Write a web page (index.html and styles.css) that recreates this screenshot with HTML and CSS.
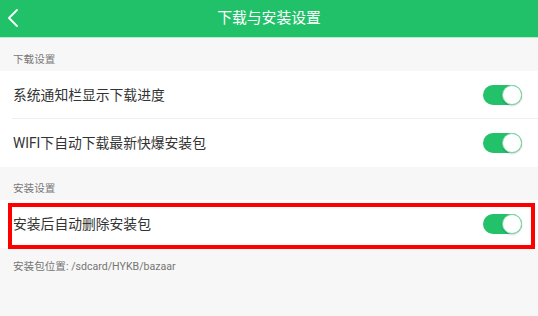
FILE: index.html
```html
<!DOCTYPE html>
<html lang="zh-CN">
<head>
<meta charset="utf-8">
<title>下载与安装设置</title>
<link rel="stylesheet" href="styles.css">
</head>
<body>
<div class="page">
  <header class="topbar">
    <span class="back">
      <svg width="26" height="37" viewBox="0 0 26 37"><polyline points="17,10 9,18 17,26" fill="none" stroke="#fff" stroke-width="1.8" stroke-linecap="round" stroke-linejoin="round"/></svg>
    </span>
    <h1 class="title">下载与安装设置</h1>
  </header>

  <div class="section">下载设置</div>
  <div class="group">
    <div class="row divided">
      <span class="label">系统通知栏显示下载进度</span>
      <span class="switch on"><span class="knob"></span></span>
    </div>
    <div class="row">
      <span class="label">WIFI下自动下载最新快爆安装包</span>
      <span class="switch on"><span class="knob"></span></span>
    </div>
  </div>

  <div class="section">安装设置</div>
  <div class="group">
    <div class="row highlighted">
      <span class="label">安装后自动删除安装包</span>
      <span class="switch on"><span class="knob"></span></span>
      <span class="mark"></span>
    </div>
  </div>

  <p class="path">安装包位置: /sdcard/HYKB/bazaar</p>
</div>
</body>
</html>
```

FILE: styles.css
```css
* { box-sizing: border-box; }
html, body {
  margin: 0;
  padding: 0;
  background: #f7f7f7;
}
body {
  font-family: Roboto, "Noto Sans CJK SC", sans-serif;
  width: 538px;
  height: 316px;
  overflow: hidden;
}
.page {
  display: flex;
  flex-direction: column;
}
.topbar {
  position: relative;
  height: 38px;
  background: #21c16a;
  border-bottom: 1px solid #b9ebcc;
  display: flex;
  align-items: center;
  justify-content: center;
}
.back {
  position: absolute;
  left: 0;
  top: 0;
  display: flex;
}
.title {
  margin: 0;
  font-size: 14.8px;
  font-weight: 400;
  color: #fff;
  line-height: 37px;
}
.section {
  height: 33px;
  padding: 14px 13px 3px;
  font-size: 10.6px;
  line-height: 16px;
  color: #777;
}
.group {
  background: #fff;
}
.row {
  position: relative;
  height: 48px;
  display: flex;
  align-items: center;
  justify-content: space-between;
  padding: 0 16px 0 13px;
}
.row.divided::after {
  content: "";
  position: absolute;
  left: 12px;
  right: 0;
  bottom: 0;
  height: 1px;
  background: #efefef;
}
.label {
  font-size: 13.8px;
  color: #333;
  line-height: 20px;
}
.switch {
  position: relative;
  width: 39px;
  height: 20px;
  border-radius: 10px;
  background: #22c16a;
  margin-top: -1px;
}
.knob {
  position: absolute;
  right: 0;
  top: 0;
  width: 20px;
  height: 20px;
  border-radius: 50%;
  background: #fff;
  border: 1px solid #7fd9a6;
  box-shadow: 0 1px 2px rgba(0,0,0,0.18);
}
.mark {
  position: absolute;
  left: 8px;
  right: 3px;
  top: 3px;
  bottom: -1px;
  border: 4px solid #ff0000;
  pointer-events: none;
}
.path {
  margin: 0;
  padding: 11px 13px 0;
  font-size: 10.6px;
  line-height: 16px;
  color: #757575;
}
```
